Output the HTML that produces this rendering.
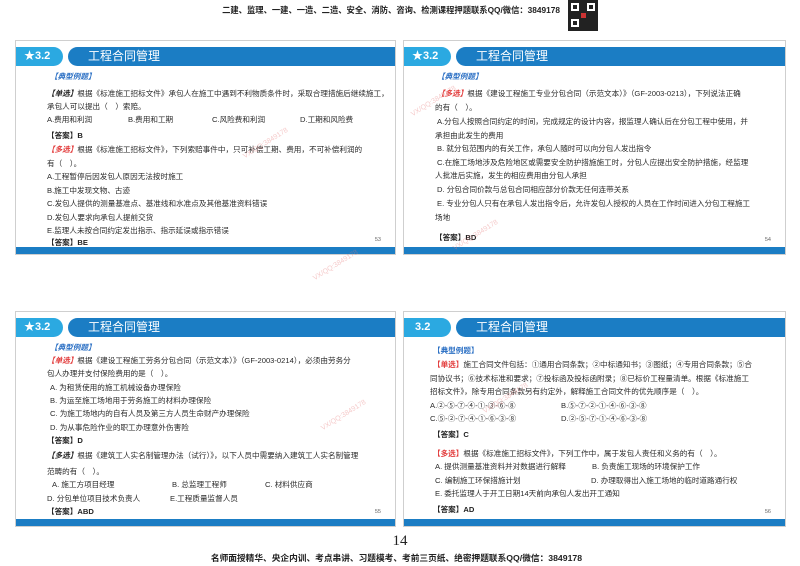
<!DOCTYPE html>
<html><head><meta charset="utf-8">
<style>
*{margin:0;padding:0;box-sizing:border-box}
body{width:800px;height:566px;background:#fff;position:relative;overflow:hidden;font-family:"Liberation Sans","Noto Sans CJK SC",sans-serif;color:#333}
.slide{position:absolute;border:1px solid #cfcfcf;background:#fff}
.badge{position:absolute;left:0;top:6px;width:47px;height:19px;background:#2ba9e1;border-radius:0 10px 10px 0;color:#fff;font-weight:bold;font-size:11px;line-height:19px;padding-left:8px}
.bar{position:absolute;left:52px;right:0;top:6px;height:19px;background:#1b7dc4;border-radius:10px 0 0 10px;color:#fff;font-size:12px;line-height:19px;padding-left:20px}
.foot{position:absolute;left:0;right:0;bottom:0;height:7px;background:#1b7dc4}
.pn{position:absolute;right:14px;bottom:11px;font-size:5.5px;color:#666}
.t{position:absolute;font-size:7.6px;line-height:8px;white-space:nowrap;color:#2a2a2a}
.b{font-weight:bold;color:#222}
.blue{color:#2a6fc4;font-weight:bold;font-style:italic}
.red{color:#e23a3a;font-weight:bold;font-style:italic}
.blk{color:#222;font-weight:bold;font-style:italic}
.wm{position:absolute;color:rgba(230,120,120,.4);font-size:7px;transform:rotate(-32deg);white-space:nowrap}
.top{position:absolute;top:4px;left:0;width:560px;text-align:right;font-size:8.3px;font-weight:bold;color:#222}
</style></head><body>
<div class="top">二建、监理、一建、一造、二造、安全、消防、咨询、检测课程押题联系QQ/微信：3849178</div>
<div style="position:absolute;left:568px;top:0;width:30px;height:31px;background:#222">
<div style="position:absolute;left:3px;top:3px;width:8px;height:8px;border:2px solid #fff"></div>
<div style="position:absolute;left:19px;top:3px;width:8px;height:8px;border:2px solid #fff"></div>
<div style="position:absolute;left:3px;top:19px;width:8px;height:8px;border:2px solid #fff"></div>
<div style="position:absolute;left:13px;top:13px;width:5px;height:5px;background:#c33"></div>
</div>

<!-- slide 1 -->
<div class="slide" style="left:15px;top:40px;width:381px;height:215px">
<div class="badge">★3.2</div><div class="bar">工程合同管理</div>
<div class="foot"></div><div class="pn">53</div>
</div>
<div class="t blue" style="left:50px;top:73px">【典型例题】</div>
<div class="t" style="left:47px;top:90px"><span class="blk">【单选】</span>根据《标准施工招标文件》承包人在施工中遇到不利物质条件时，采取合理措施后继续施工，</div>
<div class="t" style="left:47px;top:103px">承包人可以提出（　）索赔。</div>
<div class="t" style="left:47px;top:116px">A.费用和利润</div>
<div class="t" style="left:128px;top:116px">B.费用和工期</div>
<div class="t" style="left:212px;top:116px">C.风险费和利润</div>
<div class="t" style="left:300px;top:116px">D.工期和风险费</div>
<div class="t b" style="left:47px;top:132px">【答案】B</div>
<div class="t" style="left:47px;top:146px"><span class="red">【多选】</span>根据《标准施工招标文件》，下列索赔事件中，只可补偿工期、费用，不可补偿利润的</div>
<div class="t" style="left:47px;top:160px">有（　）。</div>
<div class="t" style="left:47px;top:173px">A.工程暂停后因发包人原因无法按时施工</div>
<div class="t" style="left:47px;top:187px">B.施工中发现文物、古迹</div>
<div class="t" style="left:47px;top:200px">C.发包人提供的测量基准点、基准线和水准点及其他基准资料错误</div>
<div class="t" style="left:47px;top:214px">D.发包人要求向承包人提前交货</div>
<div class="t" style="left:47px;top:227px">E.监理人未按合同约定发出指示、指示延误或指示错误</div>
<div class="t b" style="left:47px;top:239px">【答案】BE</div>

<!-- slide 2 -->
<div class="slide" style="left:403px;top:40px;width:383px;height:215px">
<div class="badge">★3.2</div><div class="bar">工程合同管理</div>
<div class="foot"></div><div class="pn">54</div>
</div>
<div class="t blue" style="left:437px;top:73px">【典型例题】</div>
<div class="t" style="left:437px;top:90px"><span class="red">【多选】</span>根据《建设工程施工专业分包合同（示范文本）》（GF-2003-0213），下列说法正确</div>
<div class="t" style="left:435px;top:104px">的有（　）。</div>
<div class="t" style="left:437px;top:118px">A.分包人按照合同约定的时间，完成规定的设计内容，报监理人确认后在分包工程中使用，并</div>
<div class="t" style="left:435px;top:132px">承担由此发生的费用</div>
<div class="t" style="left:437px;top:145px">B. 就分包范围内的有关工作，承包人随时可以向分包人发出指令</div>
<div class="t" style="left:437px;top:159px">C.在施工场地涉及危险地区或需要安全防护措施施工时，分包人应提出安全防护措施，经监理</div>
<div class="t" style="left:435px;top:172px">人批准后实施，发生的相应费用由分包人承担</div>
<div class="t" style="left:437px;top:186px">D. 分包合同价款与总包合同相应部分价款无任何连带关系</div>
<div class="t" style="left:437px;top:200px">E. 专业分包人只有在承包人发出指令后，允许发包人授权的人员在工作时间进入分包工程施工</div>
<div class="t" style="left:435px;top:214px">场地</div>
<div class="t b" style="left:435px;top:234px">【答案】BD</div>

<!-- slide 3 -->
<div class="slide" style="left:15px;top:311px;width:381px;height:216px">
<div class="badge">★3.2</div><div class="bar">工程合同管理</div>
<div class="foot"></div><div class="pn">55</div>
</div>
<div class="t blue" style="left:50px;top:344px">【典型例题】</div>
<div class="t" style="left:47px;top:357px"><span class="red">【单选】</span>根据《建设工程施工劳务分包合同（示范文本）》（GF-2003-0214），必须由劳务分</div>
<div class="t" style="left:47px;top:370px">包人办理并支付保险费用的是（　）。</div>
<div class="t" style="left:50px;top:384px">A. 为租赁使用的施工机械设备办理保险</div>
<div class="t" style="left:50px;top:397px">B. 为运至施工场地用于劳务施工的材料办理保险</div>
<div class="t" style="left:50px;top:410px">C. 为施工场地内的自有人员及第三方人员生命财产办理保险</div>
<div class="t" style="left:50px;top:424px">D. 为从事危险作业的职工办理意外伤害险</div>
<div class="t b" style="left:47px;top:437px">【答案】D</div>
<div class="t" style="left:47px;top:452px"><span class="blk">【多选】</span>根据《建筑工人实名制管理办法（试行）》，以下人员中需要纳入建筑工人实名制管理</div>
<div class="t" style="left:47px;top:468px">范畴的有（　）。</div>
<div class="t" style="left:52px;top:481px">A. 施工方项目经理</div>
<div class="t" style="left:172px;top:481px">B. 总监理工程师</div>
<div class="t" style="left:265px;top:481px">C. 材料供应商</div>
<div class="t" style="left:47px;top:495px">D. 分包单位项目技术负责人</div>
<div class="t" style="left:170px;top:495px">E.工程质量监督人员</div>
<div class="t b" style="left:47px;top:508px">【答案】ABD</div>

<!-- slide 4 -->
<div class="slide" style="left:403px;top:311px;width:383px;height:216px">
<div class="badge">&nbsp;3.2</div><div class="bar">工程合同管理</div>
<div class="foot"></div><div class="pn">56</div>
</div>
<div class="t" style="left:433px;top:347px;color:#2a6fc4;font-weight:bold">【典型例题】</div>
<div class="t" style="left:433px;top:361px"><span style="color:#e23a3a;font-weight:bold">【单选】</span>施工合同文件包括：①通用合同条款；②中标通知书；③图纸；④专用合同条款；⑤合</div>
<div class="t" style="left:430px;top:375px">同协议书；⑥技术标准和要求；⑦投标函及投标函附录；⑧已标价工程量清单。根据《标准施工</div>
<div class="t" style="left:430px;top:388px">招标文件》，除专用合同条款另有约定外，解释施工合同文件的优先顺序是（　）。</div>
<div class="t" style="left:430px;top:402px">A.②-⑤-⑦-④-①-③-⑥-⑧</div>
<div class="t" style="left:561px;top:402px">B.⑤-⑦-②-①-④-⑥-③-⑧</div>
<div class="t" style="left:430px;top:415px">C.⑤-②-⑦-④-①-⑥-③-⑧</div>
<div class="t" style="left:561px;top:415px">D.②-⑤-⑦-①-④-⑥-③-⑧</div>
<div class="t b" style="left:433px;top:431px">【答案】C</div>
<div class="t" style="left:433px;top:450px"><span style="color:#e23a3a;font-weight:bold">【多选】</span>根据《标准施工招标文件》，下列工作中，属于发包人责任和义务的有（　）。</div>
<div class="t" style="left:435px;top:463px">A. 提供测量基准资料并对数据进行解释</div>
<div class="t" style="left:592px;top:463px">B. 负责施工现场的环境保护工作</div>
<div class="t" style="left:435px;top:477px">C. 编制施工环保措施计划</div>
<div class="t" style="left:591px;top:477px">D. 办理取得出入施工场地的临时道路通行权</div>
<div class="t" style="left:435px;top:490px">E. 委托监理人于开工日期14天前向承包人发出开工通知</div>
<div class="t b" style="left:433px;top:506px">【答案】AD</div>

<div class="wm" style="left:240px;top:140px">VX/QQ:3849178</div>
<div class="wm" style="left:310px;top:262px">VX/QQ:3849178</div>
<div class="wm" style="left:408px;top:98px">VX/QQ:3849178</div>
<div class="wm" style="left:450px;top:232px">VX/QQ:3849178</div>
<div class="wm" style="left:318px;top:412px">VX/QQ:3849178</div>
<div class="wm" style="left:480px;top:395px">VX/QQ:3849178</div>

<div style="position:absolute;left:0;width:800px;top:533px;text-align:center;font-family:'Liberation Serif',serif;font-size:15px;color:#222">14</div>
<div style="position:absolute;left:0;width:793px;top:551px;text-align:center;font-size:8.7px;font-weight:bold;color:#222">名师面授精华、央企内训、考点串讲、习题模考、考前三页纸、绝密押题联系QQ/微信：3849178</div>
</body></html>
